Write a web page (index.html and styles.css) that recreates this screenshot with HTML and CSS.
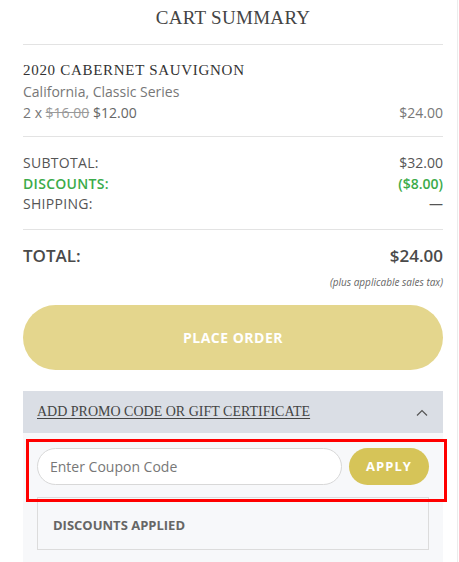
FILE: index.html
```html
<!doctype html>
<html>
<head>
	<meta charset="utf-8">
	<link rel="stylesheet" href="styles.css">
</head>
<body>

<div class="summary">
	<h1 class="summary-title">Cart Summary</h1>

	<div class="cart-item">
		<p class="item-name">2020 Cabernet Sauvignon</p>
		<p class="item-desc">California, Classic Series</p>
		<div class="item-price row">
			<span>2 x <s>$16.00</s> <span class="sale">$12.00</span></span>
			<span>$24.00</span>
		</div>
	</div>

	<div class="totals">
		<div class="row">
			<span>Subtotal:</span>
			<span class="amount">$32.00</span>
		</div>
		<div class="row discount">
			<span>Discounts:</span>
			<span class="amount">($8.00)</span>
		</div>
		<div class="row">
			<span>Shipping:</span>
			<span class="amount">&mdash;</span>
		</div>
	</div>

	<div class="grand-total">
		<div class="row total-line">
			<span>Total:</span>
			<span>$24.00</span>
		</div>
		<p class="tax-note">(plus applicable sales tax)</p>
	</div>

	<button id="placeOrder" class="btn-order">Place Order</button>

	<div class="promo">
		<div class="promo-head">
			<a href="#" class="promo-link">Add Promo Code or Gift Certificate</a>
			<svg class="chevron" width="12" height="7" viewBox="0 0 12 7">
				<path d="M1 6.5 L6 1.5 L11 6.5" fill="none" stroke="#555" stroke-width="1.2"/>
			</svg>
		</div>
		<div class="promo-body">
			<div class="coupon-row">
				<input id="couponCode" class="coupon-input" type="text" placeholder="Enter Coupon Code"/>
				<button id="apply" class="btn-apply">Apply</button>
			</div>
			<div class="applied">
				<p>Discounts Applied</p>
			</div>
			<div class="highlight"></div>
		</div>
	</div>
</div>

</body>
</html>
```

FILE: styles.css
```css
body {
    margin: 0;
    background: #fff;
    font-family: "Open Sans", "Liberation Sans", sans-serif;
    color: #444;
}

p {
    margin: 0;
}

.summary {
    width: 420px;
    padding: 0 14px 0 23px;
    border-right: 1px solid #ececec;
    overflow: hidden;
}

.summary-title {
    margin: 0;
    padding: 5px 0 13px;
    font-family: "Liberation Serif", "DejaVu Serif", serif;
    font-weight: normal;
    font-size: 19px;
    line-height: 26px;
    text-transform: uppercase;
    text-align: center;
    color: #444;
    letter-spacing: 0.3px;
}

.row {
    display: flex;
    justify-content: space-between;
}

.cart-item {
    border-top: 1px solid #e3e3e3;
    border-bottom: 1px solid #e3e3e3;
    padding: 14px 0 13px;
}

.item-name {
    font-family: "Liberation Serif", "DejaVu Serif", serif;
    font-size: 15px;
    line-height: 22px;
    text-transform: uppercase;
    letter-spacing: 0.7px;
    color: #333;
}

.item-desc,
.item-price {
    font-size: 14px;
    line-height: 21px;
    color: #777;
}

.item-price s {
    color: #999;
}

.item-price .sale {
    color: #666;
}

.totals {
    border-bottom: 1px solid #e3e3e3;
    padding: 16px 0 14px;
    font-size: 14px;
    line-height: 20.5px;
    text-transform: uppercase;
    letter-spacing: 0.3px;
    color: #555;
}

.totals .amount {
    text-transform: none;
    letter-spacing: 0;
}

.totals .discount {
    color: #3bab4a;
    font-weight: 600;
}

.grand-total {
    padding-top: 14px;
}

.total-line {
    font-size: 17px;
    line-height: 24px;
    font-weight: 600;
    text-transform: uppercase;
    color: #4a4a4a;
}

.tax-note {
    margin-top: 7px;
    font-size: 10px;
    line-height: 14px;
    font-style: italic;
    text-align: right;
    color: #666;
}

.btn-order {
    display: block;
    width: 100%;
    height: 65px;
    margin-top: 16px;
    border: none;
    border-radius: 33px;
    background: #e4d68d;
    color: #fff;
    font-family: "Open Sans", sans-serif;
    font-weight: 700;
    font-size: 14px;
    letter-spacing: 0.5px;
    text-transform: uppercase;
    -webkit-appearance: none;
}

.promo {
    margin-top: 21px;
}

.promo-head {
    display: flex;
    align-items: center;
    justify-content: space-between;
    height: 42px;
    padding: 0 15px 0 14px;
    background: #dadee5;
}

.promo-link {
    font-family: "Liberation Serif", "DejaVu Serif", serif;
    font-size: 14px;
    text-transform: uppercase;
    color: #444;
    text-decoration: underline;
    text-underline-offset: 2px;
}

.chevron {
    display: block;
    margin-top: 1px;
}

.promo-body {
    position: relative;
    background: #f7f8fa;
    padding: 15px 14px 12px;
}

.coupon-row {
    display: flex;
    gap: 7px;
}

.coupon-input {
    flex: 1;
    min-width: 0;
    height: 37px;
    box-sizing: border-box;
    padding: 0 12px;
    border: 1px solid #d8d8d8;
    border-radius: 19px;
    background: #fff;
    font-family: "Open Sans", sans-serif;
    font-size: 14px;
    color: #444;
}

.coupon-input::placeholder {
    color: #777;
}

.btn-apply {
    width: 80px;
    height: 37px;
    border: none;
    border-radius: 19px;
    background: #d6c458;
    color: #fff;
    font-family: "Open Sans", sans-serif;
    font-weight: 700;
    font-size: 13px;
    letter-spacing: 1px;
    text-transform: uppercase;
    -webkit-appearance: none;
}

.applied {
    margin-top: 12px;
    padding: 19px 15px 15px;
    border: 1px solid #dcdcdc;
}

.applied p {
    font-size: 13px;
    line-height: 17px;
    font-weight: 700;
    text-transform: uppercase;
    color: #666;
}

/* annotation box drawn over the coupon row */
.highlight {
    position: absolute;
    top: 6px;
    left: 3px;
    width: 415px;
    height: 57px;
    border: 3px solid #f00;
    pointer-events: none;
}
```
